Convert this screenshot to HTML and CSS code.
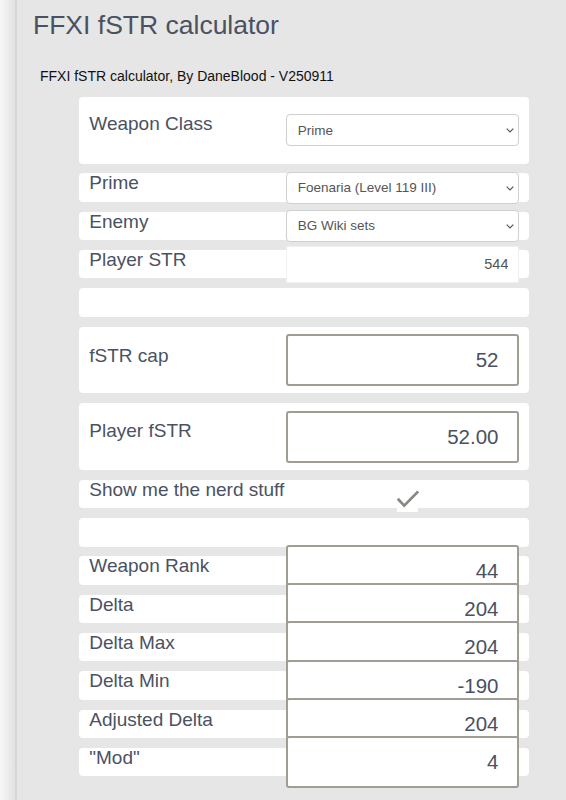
FILE: index.html
```html
<!DOCTYPE html>
<html lang="en">
<head>
<meta charset="utf-8">
<title>FFXI fSTR calculator</title>
<link rel="stylesheet" href="styles.css">
</head>
<body>
<div class="page">
  <h1 class="title">FFXI fSTR calculator</h1>
  <div class="subtitle">FFXI fSTR calculator, By DaneBlood - V250911</div>
  <div class="form">
    <div class="row big wc">
      <label class="lbl">Weapon Class</label>
      <div class="sel"><select><option>Prime</option></select><svg class="chev" width="8" height="5" viewBox="0 0 8 5"><polyline points="0.7,0.7 4,4 7.3,0.7" fill="none" stroke="#555" stroke-width="1.2"/></svg></div>
    </div>
    <div class="row">
      <label class="lbl">Prime</label>
      <div class="sel"><select><option>Foenaria (Level 119 III)</option></select><svg class="chev" width="8" height="5" viewBox="0 0 8 5"><polyline points="0.7,0.7 4,4 7.3,0.7" fill="none" stroke="#555" stroke-width="1.2"/></svg></div>
    </div>
    <div class="row">
      <label class="lbl">Enemy</label>
      <div class="sel"><select><option>BG Wiki sets</option></select><svg class="chev" width="8" height="5" viewBox="0 0 8 5"><polyline points="0.7,0.7 4,4 7.3,0.7" fill="none" stroke="#555" stroke-width="1.2"/></svg></div>
    </div>
    <div class="row">
      <label class="lbl">Player STR</label>
      <input class="str" type="text" value="544">
    </div>
    <div class="row"></div>
    <div class="row big fcap">
      <label class="lbl">fSTR cap</label>
      <input class="num" type="text" value="52" readonly>
    </div>
    <div class="row big pf">
      <label class="lbl">Player fSTR</label>
      <input class="num" type="text" value="52.00" readonly>
    </div>
    <div class="row">
      <label class="lbl">Show me the nerd stuff</label>
      <span class="check"><svg width="22" height="26" viewBox="0 0 22 26"><polyline points="0.8,12.8 7.2,19.6 21.2,5.4" fill="none" stroke="#8a8680" stroke-width="2.7"/></svg></span>
    </div>
    <div class="row"></div>
    <div class="row">
      <label class="lbl">Weapon Rank</label>
      <input class="num" type="text" value="44" readonly>
    </div>
    <div class="row">
      <label class="lbl">Delta</label>
      <input class="num" type="text" value="204" readonly>
    </div>
    <div class="row">
      <label class="lbl">Delta Max</label>
      <input class="num" type="text" value="204" readonly>
    </div>
    <div class="row">
      <label class="lbl">Delta Min</label>
      <input class="num" type="text" value="-190" readonly>
    </div>
    <div class="row">
      <label class="lbl">Adjusted Delta</label>
      <input class="num" type="text" value="204" readonly>
    </div>
    <div class="row">
      <label class="lbl">"Mod"</label>
      <input class="num" type="text" value="4" readonly>
    </div>
  </div>
</div>
</body>
</html>
```
FILE: styles.css
```css
html, body {
  margin: 0;
  padding: 0;
}
body {
  background: linear-gradient(to right, #f8f8f8 0, #e2e2e2 15px);
  font-family: "Liberation Sans", Arial, sans-serif;
  overflow: hidden;
}
.page {
  margin-left: 15px;
  border-left: 2px solid #d6d6d6;
  background: #e6e6e6;
  min-height: 800px;
  padding-top: 10px;
}
.title {
  margin: 0;
  padding-left: 16px;
  font-size: 26.5px;
  line-height: 30px;
  font-weight: normal;
  color: #4a5262;
}
.subtitle {
  margin-top: 28px;
  padding-left: 23px;
  font-size: 14px;
  line-height: 16px;
  color: #111;
}
.form {
  margin-top: 12.8px;
  margin-left: 62.3px;
  width: 450px;
}
.row {
  display: flex;
  align-items: center;
  box-sizing: border-box;
  height: 28.5px;
  margin-bottom: 9.8px;
  padding: 0 9.8px 0 10px;
  background: #fff;
  border-radius: 4px;
}
.row.big {
  height: 66.8px;
}
.lbl {
  flex: none;
  align-self: flex-start;
  width: 196.7px;
  font-size: 19px;
  line-height: 20px;
  color: #4a5262;
}
.wc .lbl { margin-top: 17.5px; }
.fcap .lbl { margin-top: 19.5px; }
.pf .lbl { margin-top: 18px; }
.sel {
  position: relative;
  flex: none;
  width: 233.5px;
  height: 32px;
}
.sel select {
  -webkit-appearance: none;
  appearance: none;
  box-sizing: border-box;
  width: 100%;
  height: 100%;
  margin: 0;
  padding: 0 0 0 10.7px;
  border: 1px solid #cfcfcf;
  border-radius: 4px;
  background: #fff;
  font-family: "Liberation Sans", Arial, sans-serif;
  font-size: 13.5px;
  color: #555;
}
.chev {
  position: absolute;
  right: 5.5px;
  top: 14px;
}
.str {
  flex: none;
  box-sizing: border-box;
  width: 233.5px;
  height: 36.6px;
  margin: 0;
  padding: 0 10px 0 0;
  border: 1px solid #f0f0f0;
  border-radius: 2px;
  background: #fff;
  text-align: right;
  font-family: "Liberation Sans", Arial, sans-serif;
  font-size: 14.5px;
  color: #555;
}
.num {
  flex: none;
  box-sizing: border-box;
  width: 233.5px;
  height: 52px;
  margin: 0;
  padding: 0 19px 0 0;
  border: 2px solid #a19d94;
  border-radius: 3px;
  background: #fff;
  text-align: right;
  font-family: "Liberation Sans", Arial, sans-serif;
  font-size: 20.5px;
  color: #4a5262;
  outline: none;
}
.check {
  flex: none;
  align-self: flex-start;
  display: block;
  width: 21px;
  height: 26px;
  margin-top: 6px;
  margin-left: 111.3px;
  background: #fff;
}
.check svg {
  display: block;
}
```
